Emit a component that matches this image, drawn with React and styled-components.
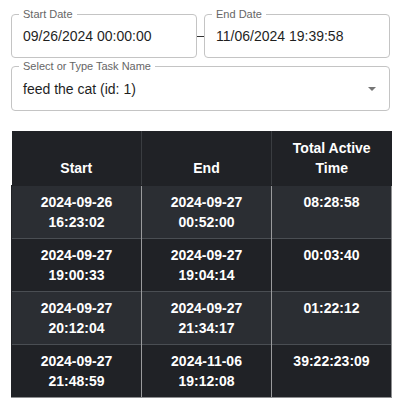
import styled, { createGlobalStyle } from 'styled-components'

const GlobalStyle = createGlobalStyle`
  body {
    margin: 0;
    background: #fff;
    font-family: "Liberation Sans", Arial, sans-serif;
  }
`

const Page = styled.div`
  padding: 14px 10px 0 11px;
  width: 400px;
  box-sizing: border-box;
`

const DateRow = styled.div`
  display: flex;
  align-items: center;
`

const Field = styled.div`
  position: relative;
  flex: ${props => (props.$grow ? 1 : 'none')};
  height: ${props => props.$height || 44}px;
  border: 1px solid #c4c4c4;
  border-radius: 4px;
  display: flex;
  align-items: center;
  padding: 0 11px;
  box-sizing: border-box;
  font-size: 14px;
  color: #1f1f1f;
`

const Label = styled.span`
  position: absolute;
  top: -7px;
  left: 7px;
  padding: 0 4px;
  background: #fff;
  font-size: 11px;
  line-height: 12px;
  color: #666;
`

const Dash = styled.div`
  width: 7px;
  height: 1px;
  background: #333;
`

const SelectField = styled(Field)`
  margin-top: 8px;
  justify-content: space-between;
`

const Caret = styled.span`
  width: 0;
  height: 0;
  border-left: 4px solid transparent;
  border-right: 4px solid transparent;
  border-top: 4px solid #757575;
  margin-right: 2px;
`

const Table = styled.table`
  margin-top: 20px;
  width: 380px;
  border-collapse: collapse;
  table-layout: fixed;
  font-size: 14px;
  font-weight: bold;
  line-height: 20px;
  color: #fff;
  text-align: center;
`

const Th = styled.th`
  background: #202226;
  padding: 7px 8px;
  vertical-align: bottom;
  border-left: 1px solid #3a3d41;
  border-bottom: 1px solid #202226;
  &:first-child { border-left: none; }
`

const Td = styled.td`
  background: ${props => (props.$odd ? '#2b2e33' : '#202226')};
  padding: 6px 8px;
  vertical-align: top;
  border-top: 1px solid #4a4e53;
  border-left: 1px solid #9a9b9d;
  &:first-child { border-left: 1px solid #202226; }
  &:last-child { border-right: 1px solid #8e8f91; }
`

const Tr = styled.tr`
  &:last-child td { border-bottom: 1px solid #8e8f91; }
`

const rows = [
  ['2024-09-26', '16:23:02', '2024-09-27', '00:52:00', '08:28:58'],
  ['2024-09-27', '19:00:33', '2024-09-27', '19:04:14', '00:03:40'],
  ['2024-09-27', '20:12:04', '2024-09-27', '21:34:17', '01:22:12'],
  ['2024-09-27', '21:48:59', '2024-11-06', '19:12:08', '39:22:23:09'],
]

const App = () => {
  return (
    <Page>
      <GlobalStyle />
      <DateRow>
        <Field $grow>
          <Label>Start Date</Label>
          09/26/2024 00:00:00
        </Field>
        <Dash />
        <Field $grow>
          <Label>End Date</Label>
          11/06/2024 19:39:58
        </Field>
      </DateRow>
      <SelectField $height={45}>
        <Label>Select or Type Task Name</Label>
        feed the cat (id: 1)
        <Caret />
      </SelectField>
      <Table>
        <colgroup>
          <col style={{ width: 130 }} />
          <col style={{ width: 130 }} />
          <col style={{ width: 120 }} />
        </colgroup>
        <thead>
          <tr>
            <Th>Start</Th>
            <Th>End</Th>
            <Th>Total Active Time</Th>
          </tr>
        </thead>
        <tbody>
          {rows.map((r, i) => (
            <Tr key={i}>
              <Td $odd={i % 2 === 0}>{r[0]}<br />{r[1]}</Td>
              <Td $odd={i % 2 === 0}>{r[2]}<br />{r[3]}</Td>
              <Td $odd={i % 2 === 0}>{r[4]}</Td>
            </Tr>
          ))}
        </tbody>
      </Table>
    </Page>
  )
}

export default App
